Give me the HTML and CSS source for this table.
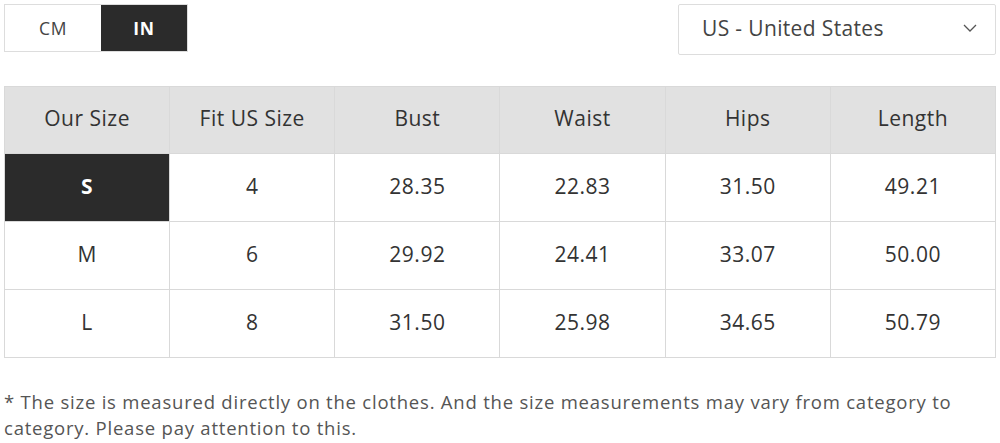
FILE: index.html
```html
<!DOCTYPE html>
<html>
<head>
<meta charset="utf-8">
<link rel="stylesheet" href="styles.css">
</head>
<body>
<div class="page">
  <div class="top">
    <div class="toggle">
      <span class="unit">CM</span>
      <span class="unit active">IN</span>
    </div>
    <div class="select">
      <span>US - United States</span>
      <svg class="chev" width="14" height="8" viewBox="0 0 14 8"><path d="M1 1 L7 7 L13 1" fill="none" stroke="#555" stroke-width="1.3"/></svg>
    </div>
  </div>
  <table class="sizes">
    <thead>
      <tr><th>Our Size</th><th>Fit US Size</th><th>Bust</th><th>Waist</th><th>Hips</th><th>Length</th></tr>
    </thead>
    <tbody>
      <tr><td class="sel">S</td><td>4</td><td>28.35</td><td>22.83</td><td>31.50</td><td>49.21</td></tr>
      <tr><td>M</td><td>6</td><td>29.92</td><td>24.41</td><td>33.07</td><td>50.00</td></tr>
      <tr><td>L</td><td>8</td><td>31.50</td><td>25.98</td><td>34.65</td><td>50.79</td></tr>
    </tbody>
  </table>
  <p class="note">* The size is measured directly on the clothes. And the size measurements may vary from category to category. Please pay attention to this.</p>
</div>
</body>
</html>
```
FILE: styles.css
```css
* { box-sizing: border-box; }
body {
  margin: 0;
  background: #fff;
  font-family: "Open Sans", "Noto Sans", sans-serif;
  color: #333;
}
.page {
  padding: 4px 4px 0 4px;
}
.top {
  display: flex;
  justify-content: space-between;
  align-items: flex-start;
}
.toggle {
  display: flex;
  height: 48px;
  border: 1px solid #ddd;
}
.unit {
  display: flex;
  align-items: center;
  justify-content: center;
  font-size: 17.5px;
  letter-spacing: 0.7px;
  color: #444;
  width: 96px;
}
.unit.active {
  width: 86px;
  background: #2b2b2b;
  color: #fff;
  font-weight: 700;
}
.select {
  width: 318px;
  height: 51px;
  border: 1px solid #ddd;
  border-radius: 2px;
  display: flex;
  align-items: center;
  justify-content: space-between;
  padding: 0 18px 3px 23px;
  font-size: 21px;
  letter-spacing: 0.35px;
  color: #444;
}
.sizes {
  margin-top: 31px;
  width: 992px;
  border-collapse: collapse;
  table-layout: fixed;
  font-size: 21px;
  letter-spacing: 0.5px;
  color: #333;
}
.sizes th, .sizes td {
  border: 1.5px solid #d9d9d9;
  text-align: center;
  font-weight: 400;
  padding: 0 0 4px 0;
}
.sizes th {
  background: #e1e1e1;
  height: 67px;
}
.sizes td {
  height: 68px;
}
.sizes td.sel {
  background: #2b2b2b;
  color: #fff;
  font-weight: 700;
}
.note {
  margin: 31px 0 0 0;
  font-size: 18.5px;
  letter-spacing: 0.78px;
  line-height: 26px;
  color: #555;
}
```
